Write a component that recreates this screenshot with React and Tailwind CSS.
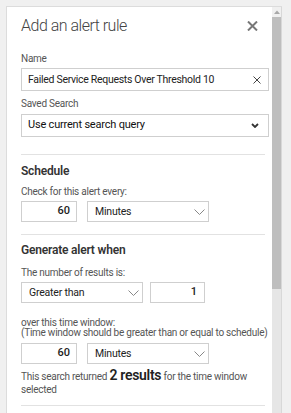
const font = { fontFamily: 'Roboto, "Noto Sans", sans-serif' };

const Label = ({ children, className = '' }) => (
    <div className={`text-[10px] leading-[14px] tracking-[-0.25px] text-[#555] ${className}`}>{children}</div>
);

const Chevron = ({ bold }) => (
    <svg width={bold ? 8 : 11} height={bold ? 5 : 6} viewBox={bold ? '0 0 8 5' : '0 0 11 6'}>
        <path
            d={bold ? 'M1 1 L4 4 L7 1' : 'M0.5 0.5 L5.5 5.5 L10.5 0.5'}
            fill="none"
            stroke={bold ? '#333' : '#888'}
            strokeWidth={bold ? 1.8 : 1}
        />
    </svg>
);

const NumberBox = ({ value, className = '' }) => (
    <div className={`h-[21px] border border-[#cfcfcf] flex items-center justify-end text-[11px] font-medium text-[#222] ${className}`}>
        {value}
    </div>
);

const Select = ({ value, className = '' }) => (
    <div className={`h-[21px] border border-[#cfcfcf] flex items-center justify-between pl-[7px] pr-[3px] text-[10.5px] tracking-[-0.2px] text-[#222] ${className}`}>
        <span>{value}</span>
        <Chevron />
    </div>
);

const Divider = ({ className = '' }) => <div className={`h-px bg-[#e2e2e2] mr-[4px] ${className}`} />;

const Heading = ({ children, className = '' }) => (
    <h3 className={`text-[12px] leading-[18px] font-semibold tracking-[-0.2px] text-[#333] ${className}`}>{children}</h3>
);

export default function App() {
    return (
        <div style={font} className="w-[291px] h-[413px] bg-[#f0f0f0] overflow-hidden pt-[6px] pl-[6px]">
            <div className="flex w-[276px] h-[420px] bg-white border-l border-t border-[#dcdcdc]">
                <div className="flex-1 pl-[14px] pr-[3px]">
                    <div className="mt-[6px] flex items-center justify-between h-[26px]">
                        <h2 className="text-[16px] font-light tracking-[-0.5px] text-[#444]">Add an alert rule</h2>
                        <svg width="11" height="10" viewBox="0 0 11 10" className="mr-[11px]">
                            <path d="M1 0.5 L10 9.5 M10 0.5 L1 9.5" stroke="#777" strokeWidth="2" />
                        </svg>
                    </div>

                    <Label className="mt-[13px]">Name</Label>
                    <div className="mt-[2px] h-[23px] border border-[#cfcfcf] flex items-center justify-between pl-[6px] pr-[7px] text-[10.5px] tracking-[-0.3px] text-[#222]">
                        <span>Failed Service Requests Over Threshold 10</span>
                        <svg width="8" height="8" viewBox="0 0 8 8">
                            <path d="M0.5 0.5 L7.5 7.5 M7.5 0.5 L0.5 7.5" stroke="#444" strokeWidth="1" />
                        </svg>
                    </div>

                    <Label className="mt-[6px]">Saved Search</Label>
                    <div className="mt-[3px] h-[23px] border border-[#cfcfcf] flex items-center justify-between pl-[6px] pr-[9px] text-[11px] tracking-[-0.2px] text-[#111]">
                        <span>Use current search query</span>
                        <Chevron bold />
                    </div>

                    <Divider className="mt-[17px]" />

                    <Heading className="mt-[7px]">Schedule</Heading>
                    <Label className="mt-[5px]">Check for this alert every:</Label>
                    <div className="mt-[2px] flex gap-[10px]">
                        <NumberBox value="60" className="w-[56px] pr-[6px]" />
                        <Select value="Minutes" className="w-[122px]" />
                    </div>

                    <Divider className="mt-[12px]" />

                    <Heading className="mt-[6px]">Generate alert when</Heading>
                    <Label className="mt-[7px]">The number of results is:</Label>
                    <div className="mt-[2px] flex gap-[7px]">
                        <Select value="Greater than" className="w-[122px]" />
                        <NumberBox value="1" className="w-[55px] pr-[7px]" />
                    </div>

                    <div className="mt-[15px] text-[10px] leading-[10px] tracking-[-0.25px] text-[#555]">
                        <div>over this time window:</div>
                        <div className="whitespace-nowrap">(Time window should be greater than or equal to schedule)</div>
                    </div>
                    <div className="mt-[5px] flex gap-[10px]">
                        <NumberBox value="60" className="w-[56px] pr-[6px]" />
                        <Select value="Minutes" className="w-[122px]" />
                    </div>

                    <div className="mt-[5px] text-[10px] leading-[13px] tracking-[-0.25px] text-[#555]">
                        <div className="whitespace-nowrap">
                            This search returned{' '}
                            <span className="text-[14px] leading-[13px] font-semibold tracking-[-0.3px] text-[#222]">2 results</span>{' '}
                            for the time window
                        </div>
                        <div>selected</div>
                    </div>

                    <Divider className="mt-[9px]" />
                </div>

                <div className="w-[10px] bg-[#e6e6e6] border-r border-[#d8d8d8] flex flex-col">
                    <div className="h-[10px] bg-[#f0f0f0] flex items-center justify-center">
                        <svg width="6" height="4" viewBox="0 0 6 4">
                            <path d="M0 4 L3 0.5 L6 4 Z" fill="#a8a8a8" />
                        </svg>
                    </div>
                    <div className="h-[272px] bg-[#bebebe]" />
                </div>
            </div>
        </div>
    );
}
